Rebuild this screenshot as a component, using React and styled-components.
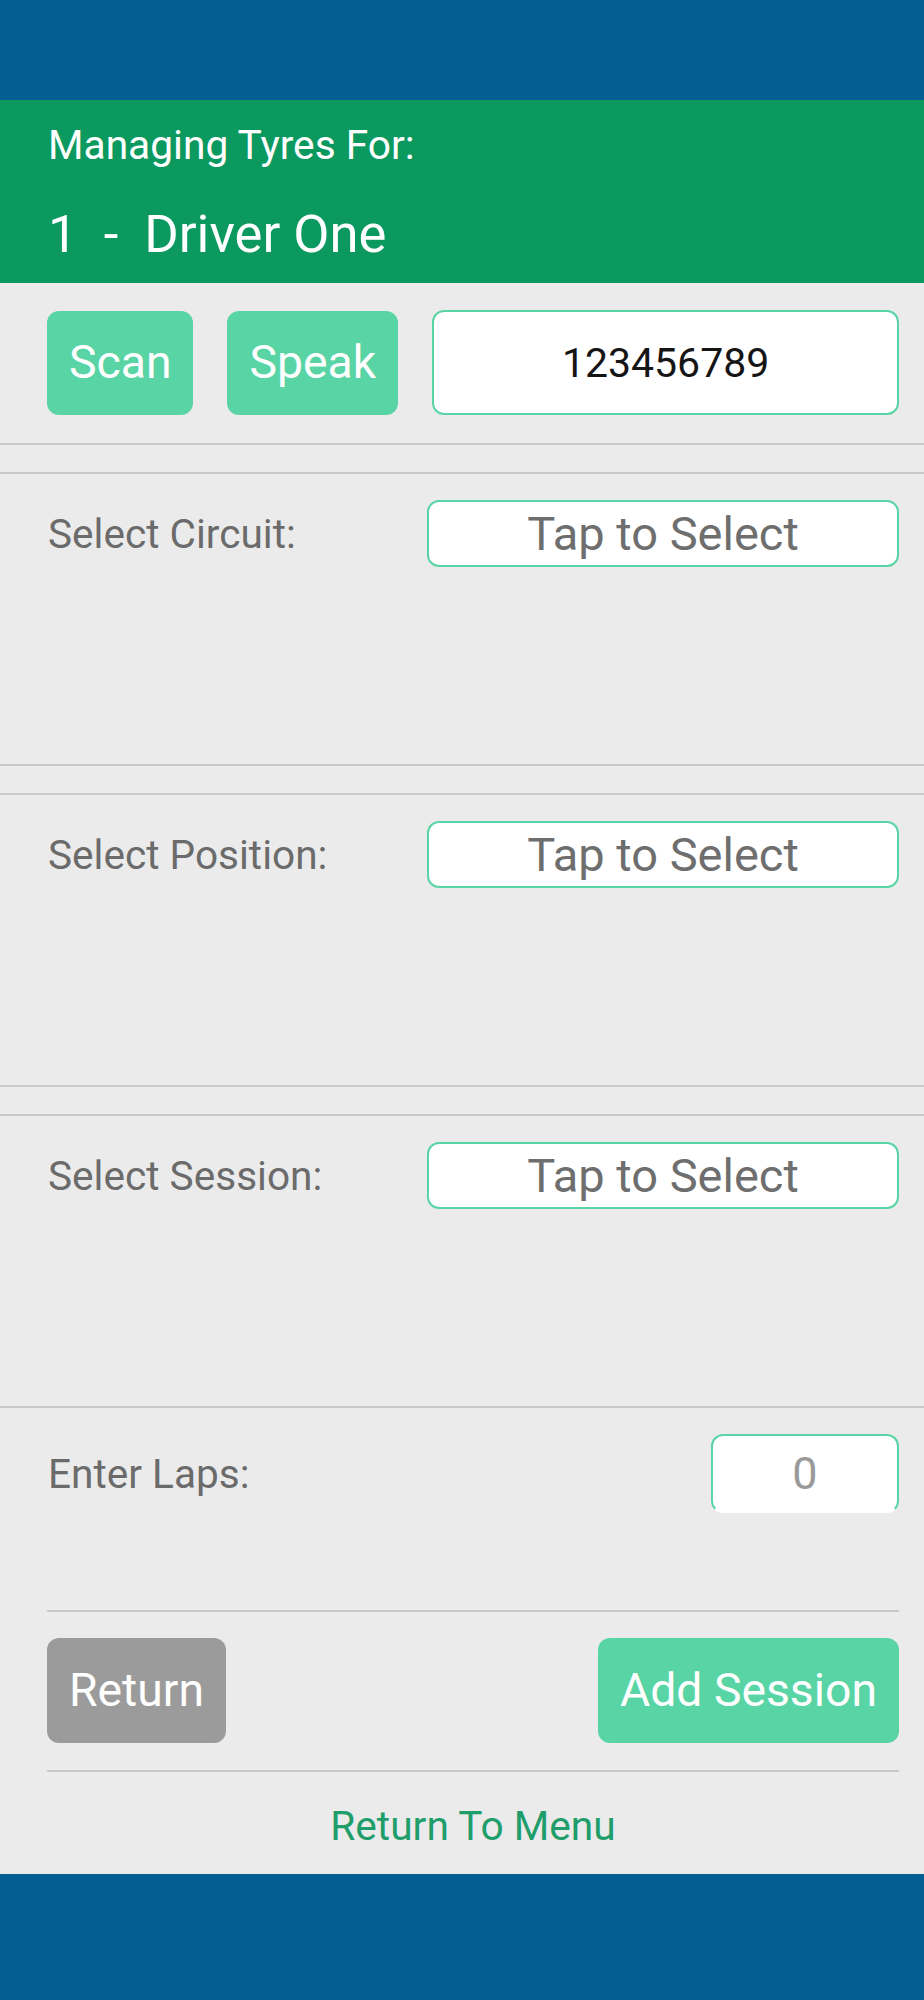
import React from "react";
import styled, { createGlobalStyle } from "styled-components";

const Global = createGlobalStyle`
  html, body { margin: 0; padding: 0; background: #ebebeb; }
  body { font-family: Roboto, "Noto Sans", sans-serif; }
  * { box-sizing: border-box; }
`;

const Page = styled.div`
  width: 924px;
  min-height: 2000px;
  display: flex;
  flex-direction: column;
  background: #ebebeb;
`;

const Bar = styled.div`
  height: ${(p) => p.$h}px;
  background: #055e92;
  flex-shrink: 0;
`;

const Header = styled.header`
  background: #0b9960;
  color: #fff;
  padding: 22px 25px 19px 48px;
`;

const Subtitle = styled.div`
  font-size: 40.7px;
  line-height: 46px;
`;

const Title = styled.div`
  font-size: 52.6px;
  line-height: 60px;
  margin-top: 36px;
  white-space: pre;
`;

const ScanSection = styled.section`
  display: flex;
  align-items: center;
  gap: 34px;
  padding: 27px 25px 28px 47px;
  border-bottom: 2px solid #c9c9c9;
`;

const GreenButton = styled.button`
  height: ${(p) => p.$h || 104}px;
  padding: 0 22px;
  border: none;
  border-radius: 12px;
  background: ${(p) => (p.$grey ? "#9b9b9b" : "#59d4a5")};
  color: #fff;
  font-family: inherit;
  font-size: 46.3px;
  line-height: 1;
  flex-shrink: 0;
`;

const CodeInput = styled.div`
  flex: 1;
  height: 105px;
  border: 2px solid #59d4a5;
  border-radius: 12px;
  background: #fff;
  display: flex;
  align-items: center;
  justify-content: center;
  font-size: 41px;
  color: #151515;
`;

const SelectSection = styled.section`
  height: 294px;
  margin-top: 27px;
  border-top: 2px solid #c9c9c9;
  border-bottom: 2px solid #c9c9c9;
  padding: 26px 25px 0 48px;
`;

const Row = styled.div`
  display: flex;
  align-items: center;
  justify-content: space-between;
`;

const Label = styled.span`
  font-size: 40.6px;
  color: #6b6b6b;
`;

const SelectBox = styled.div`
  width: 472px;
  height: 67px;
  border: 2px solid #59d4a5;
  border-radius: 12px;
  background: #fff;
  display: flex;
  align-items: center;
  justify-content: center;
  font-size: 47px;
  color: #6e6e6e;
`;

const LapsSection = styled.section`
  height: 202px;
  padding: 26px 25px 0 48px;
`;

const LapsBox = styled.div`
  width: 188px;
  height: 79px;
  border: 2px solid #59d4a5;
  border-bottom-color: #fff;
  border-radius: 12px;
  background: #fff;
  display: flex;
  align-items: center;
  justify-content: center;
  font-size: 45px;
  color: #9a9a9a;
`;

const Footer = styled.div`
  padding: 0 25px 26px 47px;
`;

const ActionRow = styled.div`
  display: flex;
  justify-content: space-between;
  align-items: center;
  padding: 26px 0 27px;
  border-top: 2px solid #c9c9c9;
  border-bottom: 2px solid #c9c9c9;
`;

const MenuLink = styled.div`
  margin-top: 32px;
  text-align: center;
  font-size: 40.7px;
  line-height: 44px;
  color: #1f9e6b;
`;

const Spacer = styled.div`
  flex: 1;
`;

const selects = ["Select Circuit:", "Select Position:", "Select Session:"];

export default function App() {
  return (
    <>
      <Global />
      <Page>
        <Bar $h={100} />
        <Header>
          <Subtitle>Managing Tyres For:</Subtitle>
          <Title>{"1  -  Driver One"}</Title>
        </Header>
        <ScanSection>
          <GreenButton>Scan</GreenButton>
          <GreenButton>Speak</GreenButton>
          <CodeInput>123456789</CodeInput>
        </ScanSection>
        {selects.map((s) => (
          <SelectSection key={s}>
            <Row>
              <Label>{s}</Label>
              <SelectBox>Tap to Select</SelectBox>
            </Row>
          </SelectSection>
        ))}
        <LapsSection>
          <Row>
            <Label>Enter Laps:</Label>
            <LapsBox>0</LapsBox>
          </Row>
        </LapsSection>
        <Footer>
          <ActionRow>
            <GreenButton $grey $h={105}>Return</GreenButton>
            <GreenButton $h={105}>Add Session</GreenButton>
          </ActionRow>
          <MenuLink>Return To Menu</MenuLink>
        </Footer>
        <Spacer />
        <Bar $h={127} />
      </Page>
    </>
  );
}
